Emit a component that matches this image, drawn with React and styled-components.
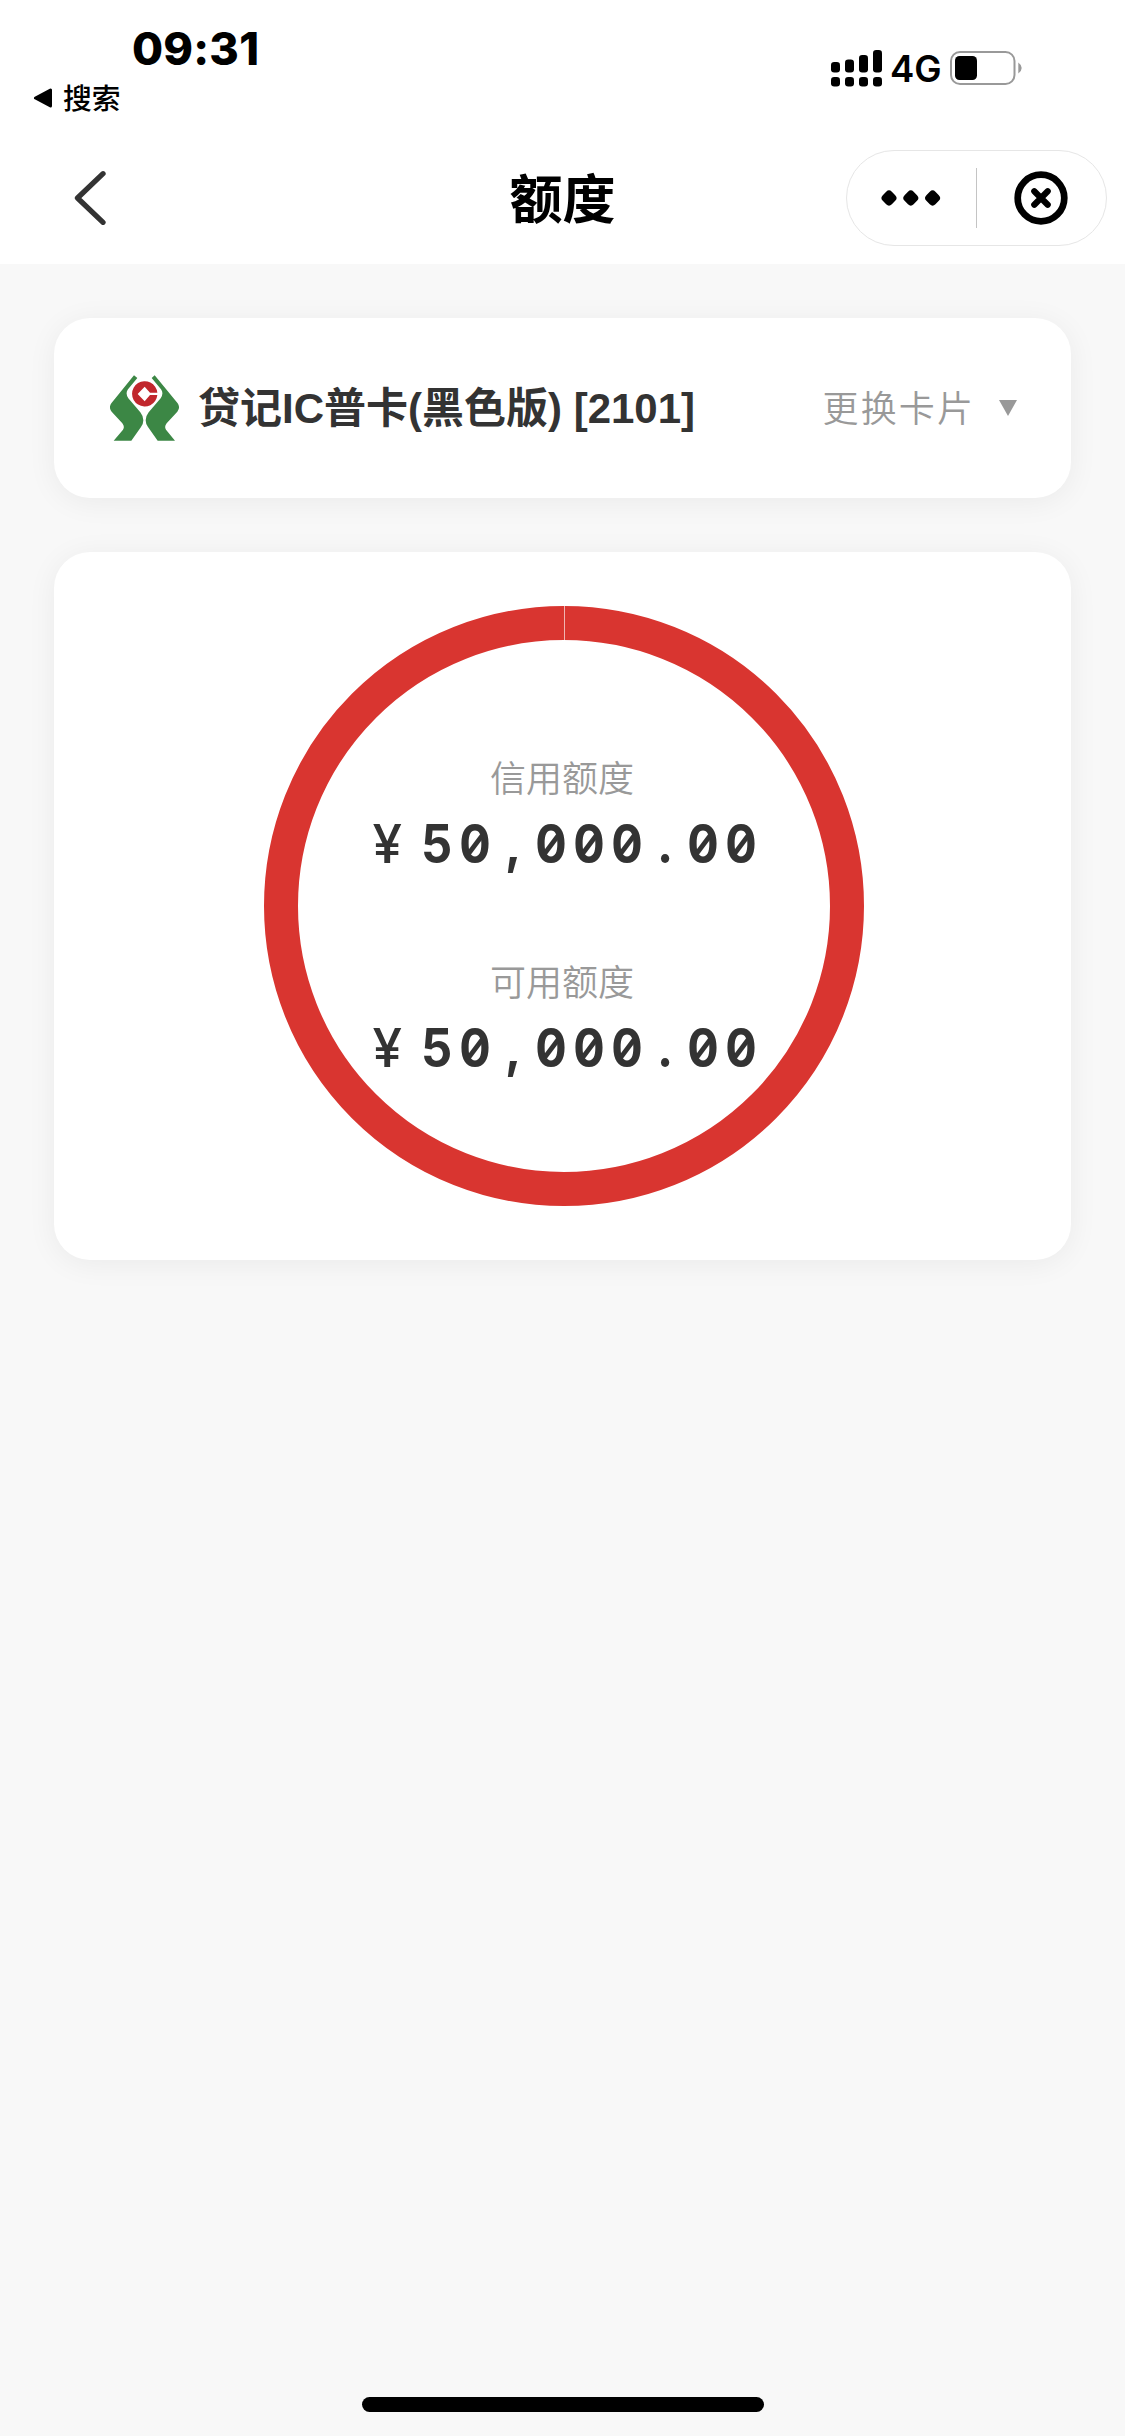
import React from "react";
import styled, { createGlobalStyle } from "styled-components";

const GlobalStyle = createGlobalStyle`
    *{
        box-sizing: border-box;
    }
    body{
        margin: 0;
        background: #f8f8f8;
        color: #333;
        font-family: "Liberation Sans", "Noto Sans CJK SC", sans-serif;
    }
    svg{
        display: block;
        flex: none;
    }
`

const Page = styled.div`
    display: flex;
    flex-direction: column;
    width: 1125px;
    height: 2436px;
    background: #f8f8f8;
`

const Header = styled.header`
    height: 264px;
    background: #fff;
    color: #000;
`

const StatusBar = styled.div`
    display: flex;
    justify-content: space-between;
    height: 150px;
    padding: 24px 103px 0 33px;
`

const Time = styled.div`
    padding-left: 99px;
    font: 800 45px/50px Inter, sans-serif;
    letter-spacing: .2px;
`

const BackToApp = styled.div`
    display: flex;
    align-items: center;
    gap: 10px;
    height: 46px;
    font: 500 28.8px/46px "Noto Sans CJK SC", sans-serif;
    svg{
        margin-top: 1px;
    }
`

const Signals = styled.div`
    display: flex;
    align-items: center;
    height: 40px;
    margin-top: 24px;
    font: 600 36.5px/40px Inter, sans-serif;
    span{
        width: 51px;
        margin: 2px 9px 0 7px;
    }
`

const NavBar = styled.nav`
    display: grid;
    grid-template-columns: 279px 1fr 279px;
    align-items: center;
    height: 96px;
    padding-right: 18px;
`

const BackButton = styled.div`
    padding-left: 73px;
`

const Title = styled.h1`
    margin: 0;
    padding: 0 0 4px 18px;
    text-align: center;
    font: 700 53px/92px "Noto Sans CJK SC", sans-serif;
`

const Capsule = styled.div`
    display: flex;
    align-items: center;
    justify-self: end;
    width: 261px;
    height: 96px;
    padding-left: 34px;
    border: 1px solid #e6e6e6;
    border-radius: 48px;
`

const Divider = styled.div`
    width: 1px;
    height: 60px;
    margin: 0 37px 0 35px;
    background: #c4c4c4;
`

const Content = styled.main`
    display: flex;
    flex: 1;
    flex-direction: column;
    gap: 54px;
    padding: 54px;
`

const Card = styled.section`
    display: flex;
    align-items: center;
    border-radius: 36px;
    background: #fff;
    box-shadow: 0 4px 30px rgba(0, 0, 0, .06);
`

const BankCard = styled(Card)`
    height: 180px;
    padding: 0 54px 0 56px;
`

const CardName = styled.div`
    flex: 1;
    margin: 2px 0 0 18px;
    font-size: 42px;
    font-weight: 700;
    line-height: 60px;
    white-space: nowrap;
`

const SwitchCard = styled.div`
    display: flex;
    align-items: center;
    gap: 24px;
    color: #999;
    font: 350 36px/54px "Noto Sans CJK SC", sans-serif;
    letter-spacing: 2.1px;
    span{
        margin-bottom: 5px;
    }
`

const QuotaCard = styled(Card)`
    justify-content: center;
    height: 708px;
    padding-left: 3px;
`

// the ::before line is the seam where the ring starts and ends
const Ring = styled.div`
    position: relative;
    display: flex;
    flex-direction: column;
    align-items: center;
    gap: 68px;
    width: 600px;
    height: 600px;
    padding-top: 109px;
    border: 34px solid #d93530;
    border-radius: 50%;
    &::before{
        content: "";
        position: absolute;
        top: -34px;
        left: 266px;
        width: 1px;
        height: 34px;
        background: #f0b4b2;
    }
`

const QuotaLabel = styled.div`
    margin-right: 4px;
    color: #999;
    text-align: center;
    font: 350 36px/54px "Noto Sans CJK SC", sans-serif;
`

const Amount = styled.div`
    display: flex;
    align-items: center;
    height: 82px;
    padding-left: 5px;
    font: 700 53px/82px Inter, sans-serif;
    font-feature-settings: "tnum";
`

const Currency = styled.span`
    width: 45px;
    font-weight: 500;
`

const Digit = styled.span`
    position: relative;
    width: 38.1px;
    display: flex;
    justify-content: center;
    transform: scaleX(.92);
    &::after{
        content: "";
        display: ${({$slashed}) => $slashed ? "block" : "none"};
        position: absolute;
        top: 29.5px;
        left: 16.5px;
        width: 5px;
        height: 23px;
        background: #333;
        transform: rotate(39deg);
    }
`

const HomeBar = styled.div`
    align-self: center;
    width: 402px;
    height: 15px;
    margin: 0 0 24px 1px;
    border-radius: 8px;
    background: #000;
`

const bars = [12, 9.5, 5, 0]

const SignalIcon = () =>
    <svg width="52" height="37" viewBox="0 0 52 37">
        {bars.map((top, i) =>
            <g key={i}>
                <rect x={i * 14} y={top} width="9" height={22.5 - top} rx="3.2" />
                <rect x={i * 14} y="27" width="9" height="9.5" rx="3.2" />
            </g>
        )}
    </svg>

const BatteryIcon = () =>
    <svg width="72" height="34" viewBox="0 0 72 34">
        <rect x="1" y="1" width="63.5" height="32" rx="9" fill="none" stroke="#999" strokeWidth="2" />
        <rect x="5" y="5" width="22" height="24" rx="4.5" />
        <path d="M68.3 11.5Q71.7 14 71.7 17T68.3 22.5Z" fill="#999" />
    </svg>

const BankLogo = () =>
    <svg width="70" height="66" viewBox="0 0 210 198">
        <g fill="#3c8745">
            <path d="M72 1L82 9L54 43Q45 55 55 70L91 112Q108 134 93 156L64 197H11L39 164Q45 155 37 145L5 110Q-5 98 4 85Z" />
            <path d="M134 1L125 9L153 43Q162 55 152 70L116 112Q99 134 114 156L143 197H195L168 164Q162 155 170 145L202 110Q212 98 203 85Z" />
        </g>
        <path d="M142 53A38 38 0 1 0 142 60H120L104 79L83 57L104 35L120 53Z" fill="#c1272d" />
    </svg>

const QuotaItem = ({label, amount}) =>
    <div>
        <QuotaLabel>{label}</QuotaLabel>
        <Amount>
            <Currency>¥</Currency>
            {amount.split("").map((char, i) => <Digit key={i} $slashed={char === "0"}>{char}</Digit>)}
        </Amount>
    </div>

const App = () =>
    <Page>
        <GlobalStyle />
        <Header>
            <StatusBar>
                <div>
                    <Time>09:31</Time>
                    <BackToApp>
                        <svg width="20" height="20" viewBox="0 0 20 20">
                            <path d="M2.5 10L17.5 2V18Z" stroke="#000" strokeWidth="3" strokeLinejoin="round" />
                        </svg>
                        搜索
                    </BackToApp>
                </div>
                <Signals>
                    <SignalIcon />
                    <span>4G</span>
                    <BatteryIcon />
                </Signals>
            </StatusBar>
            <NavBar>
                <BackButton>
                    <svg width="34" height="56" viewBox="0 0 34 56">
                        <path d="M30 3.7L4.5 28L30 52.3" fill="none" stroke="#333" strokeWidth="5.3" strokeLinecap="round" strokeLinejoin="round" />
                    </svg>
                </BackButton>
                <Title>额度</Title>
                <Capsule>
                    <svg width="60" height="16" viewBox="0 0 60 16">
                        {[8, 29.8, 51.6].map(x =>
                            <rect key={x} x={x - 6.4} y="1.6" width="12.8" height="12.8" rx="4" transform={`rotate(45 ${x} 8)`} />
                        )}
                    </svg>
                    <Divider />
                    <svg width="54" height="54" viewBox="0 0 54 54" fill="none" stroke="#000">
                        <circle cx="27" cy="27" r="23.3" strokeWidth="6.7" />
                        <path d="M20.3 20.3L33.7 33.7M33.7 20.3L20.3 33.7" strokeWidth="6.2" strokeLinecap="round" />
                    </svg>
                </Capsule>
            </NavBar>
        </Header>
        <Content>
            <BankCard>
                <BankLogo />
                <CardName>贷记IC普卡(黑色版) [2101]</CardName>
                <SwitchCard>
                    <span>更换卡片</span>
                    <svg width="18" height="16" viewBox="0 0 18 16">
                        <path d="M0 0H18L9 16Z" fill="#999" />
                    </svg>
                </SwitchCard>
            </BankCard>
            <QuotaCard>
                <Ring>
                    <QuotaItem label="信用额度" amount="50,000.00" />
                    <QuotaItem label="可用额度" amount="50,000.00" />
                </Ring>
            </QuotaCard>
        </Content>
        <HomeBar />
    </Page>

export default App
